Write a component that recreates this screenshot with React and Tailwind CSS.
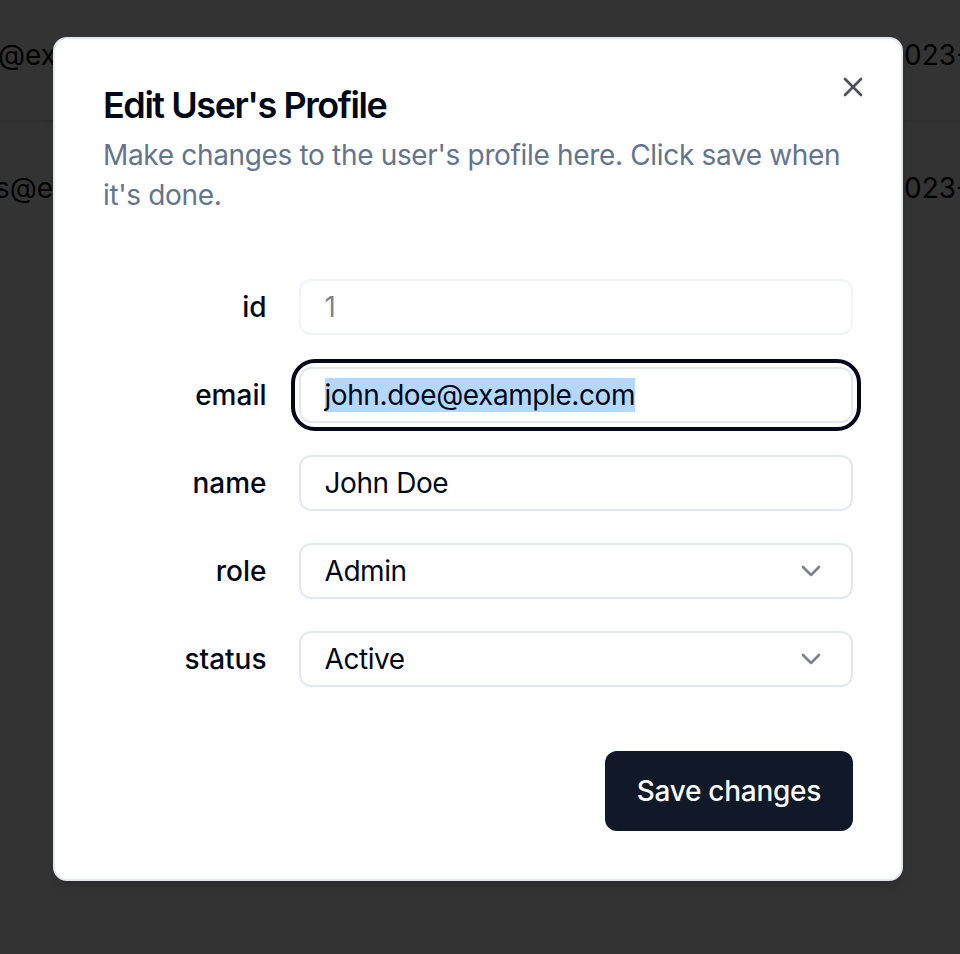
import { X, ChevronDown } from 'lucide-react'

const ROWS = [
  { email: '@example.com', shift: '-ml-[2px]', date: '2023-01-15', border: 'border-b-2' },
  { email: 's@example.com', shift: '-ml-[5px]', date: '2023-02-20', border: '' },
]

function Field({ label, children }) {
  return (
    <div className="grid grid-cols-4 items-center gap-[32px]">
      <label className="text-right text-[28px] font-medium leading-none text-[#020817]">{label}</label>
      <div className="col-span-3">{children}</div>
    </div>
  )
}

function Box({ children, className = '' }) {
  return (
    <div
      className={`flex h-[56px] items-center rounded-[12px] border-2 border-[#e2e8f0] bg-white px-[24px] text-[28px] tracking-[-0.015em] text-[#020817] ${className}`}
    >
      {children}
    </div>
  )
}

function SelectBox({ value }) {
  return (
    <Box className="justify-between">
      <span>{value}</span>
      <ChevronDown className="h-[32px] w-[32px] opacity-50" strokeWidth={2} />
    </Box>
  )
}

export default function App() {
  return (
    <div className="relative h-[954px] w-[960px] overflow-hidden bg-white font-['Inter',sans-serif]">
      {/* table under the dialog */}
      <div className="-mt-[10px]">
        {ROWS.map((row) => (
          <div key={row.date} className={`flex h-[132px] items-center justify-between border-[#e5e7eb] text-[28px] text-black ${row.border}`}>
            <span className={`whitespace-nowrap ${row.shift}`}>{row.email}</span>
            <span className="w-[73px] whitespace-nowrap">{row.date}</span>
          </div>
        ))}
      </div>

      <div className="absolute inset-0 bg-black/80" />

      <div className="absolute left-[53px] top-[37px] grid w-[850px] gap-[32px] rounded-[14px] border-2 border-[#e2e8f0] bg-white p-[48px] shadow-lg">
        <div className="flex flex-col gap-[12px]">
          <h2 className="text-[36px] font-semibold leading-none tracking-[-0.04em] text-[#020817]">Edit User's Profile</h2>
          <p className="text-[28px] leading-[40px] tracking-[-0.012em] text-[#64748b]">
            Make changes to the user's profile here. Click save when it's done.
          </p>
        </div>

        <div className="grid gap-[32px] py-[32px]">
          <Field label="id">
            <Box className="border-[#e2e8f0]/50 text-[#020817]/50">1</Box>
          </Field>
          <Field label="email">
            <div className="rounded-[16px] outline-[4px] outline-offset-[4px] outline-[#020817]">
              <Box>
                <span className="bg-[#b4d7fe] leading-[34px]">john.doe@example.com</span>
              </Box>
            </div>
          </Field>
          <Field label="name">
            <Box>John Doe</Box>
          </Field>
          <Field label="role">
            <SelectBox value="Admin" />
          </Field>
          <Field label="status">
            <SelectBox value="Active" />
          </Field>
        </div>

        <div className="flex justify-end">
          <button className="h-[80px] rounded-[12px] bg-[#111827] px-[32px] text-[28px] font-medium tracking-[-0.01em] text-[#f8fafc]">
            Save changes
          </button>
        </div>

        <button className="absolute right-[32px] top-[32px] text-[#020817] opacity-70">
          <X className="h-[32px] w-[32px]" strokeWidth={2} />
        </button>
      </div>
    </div>
  )
}
